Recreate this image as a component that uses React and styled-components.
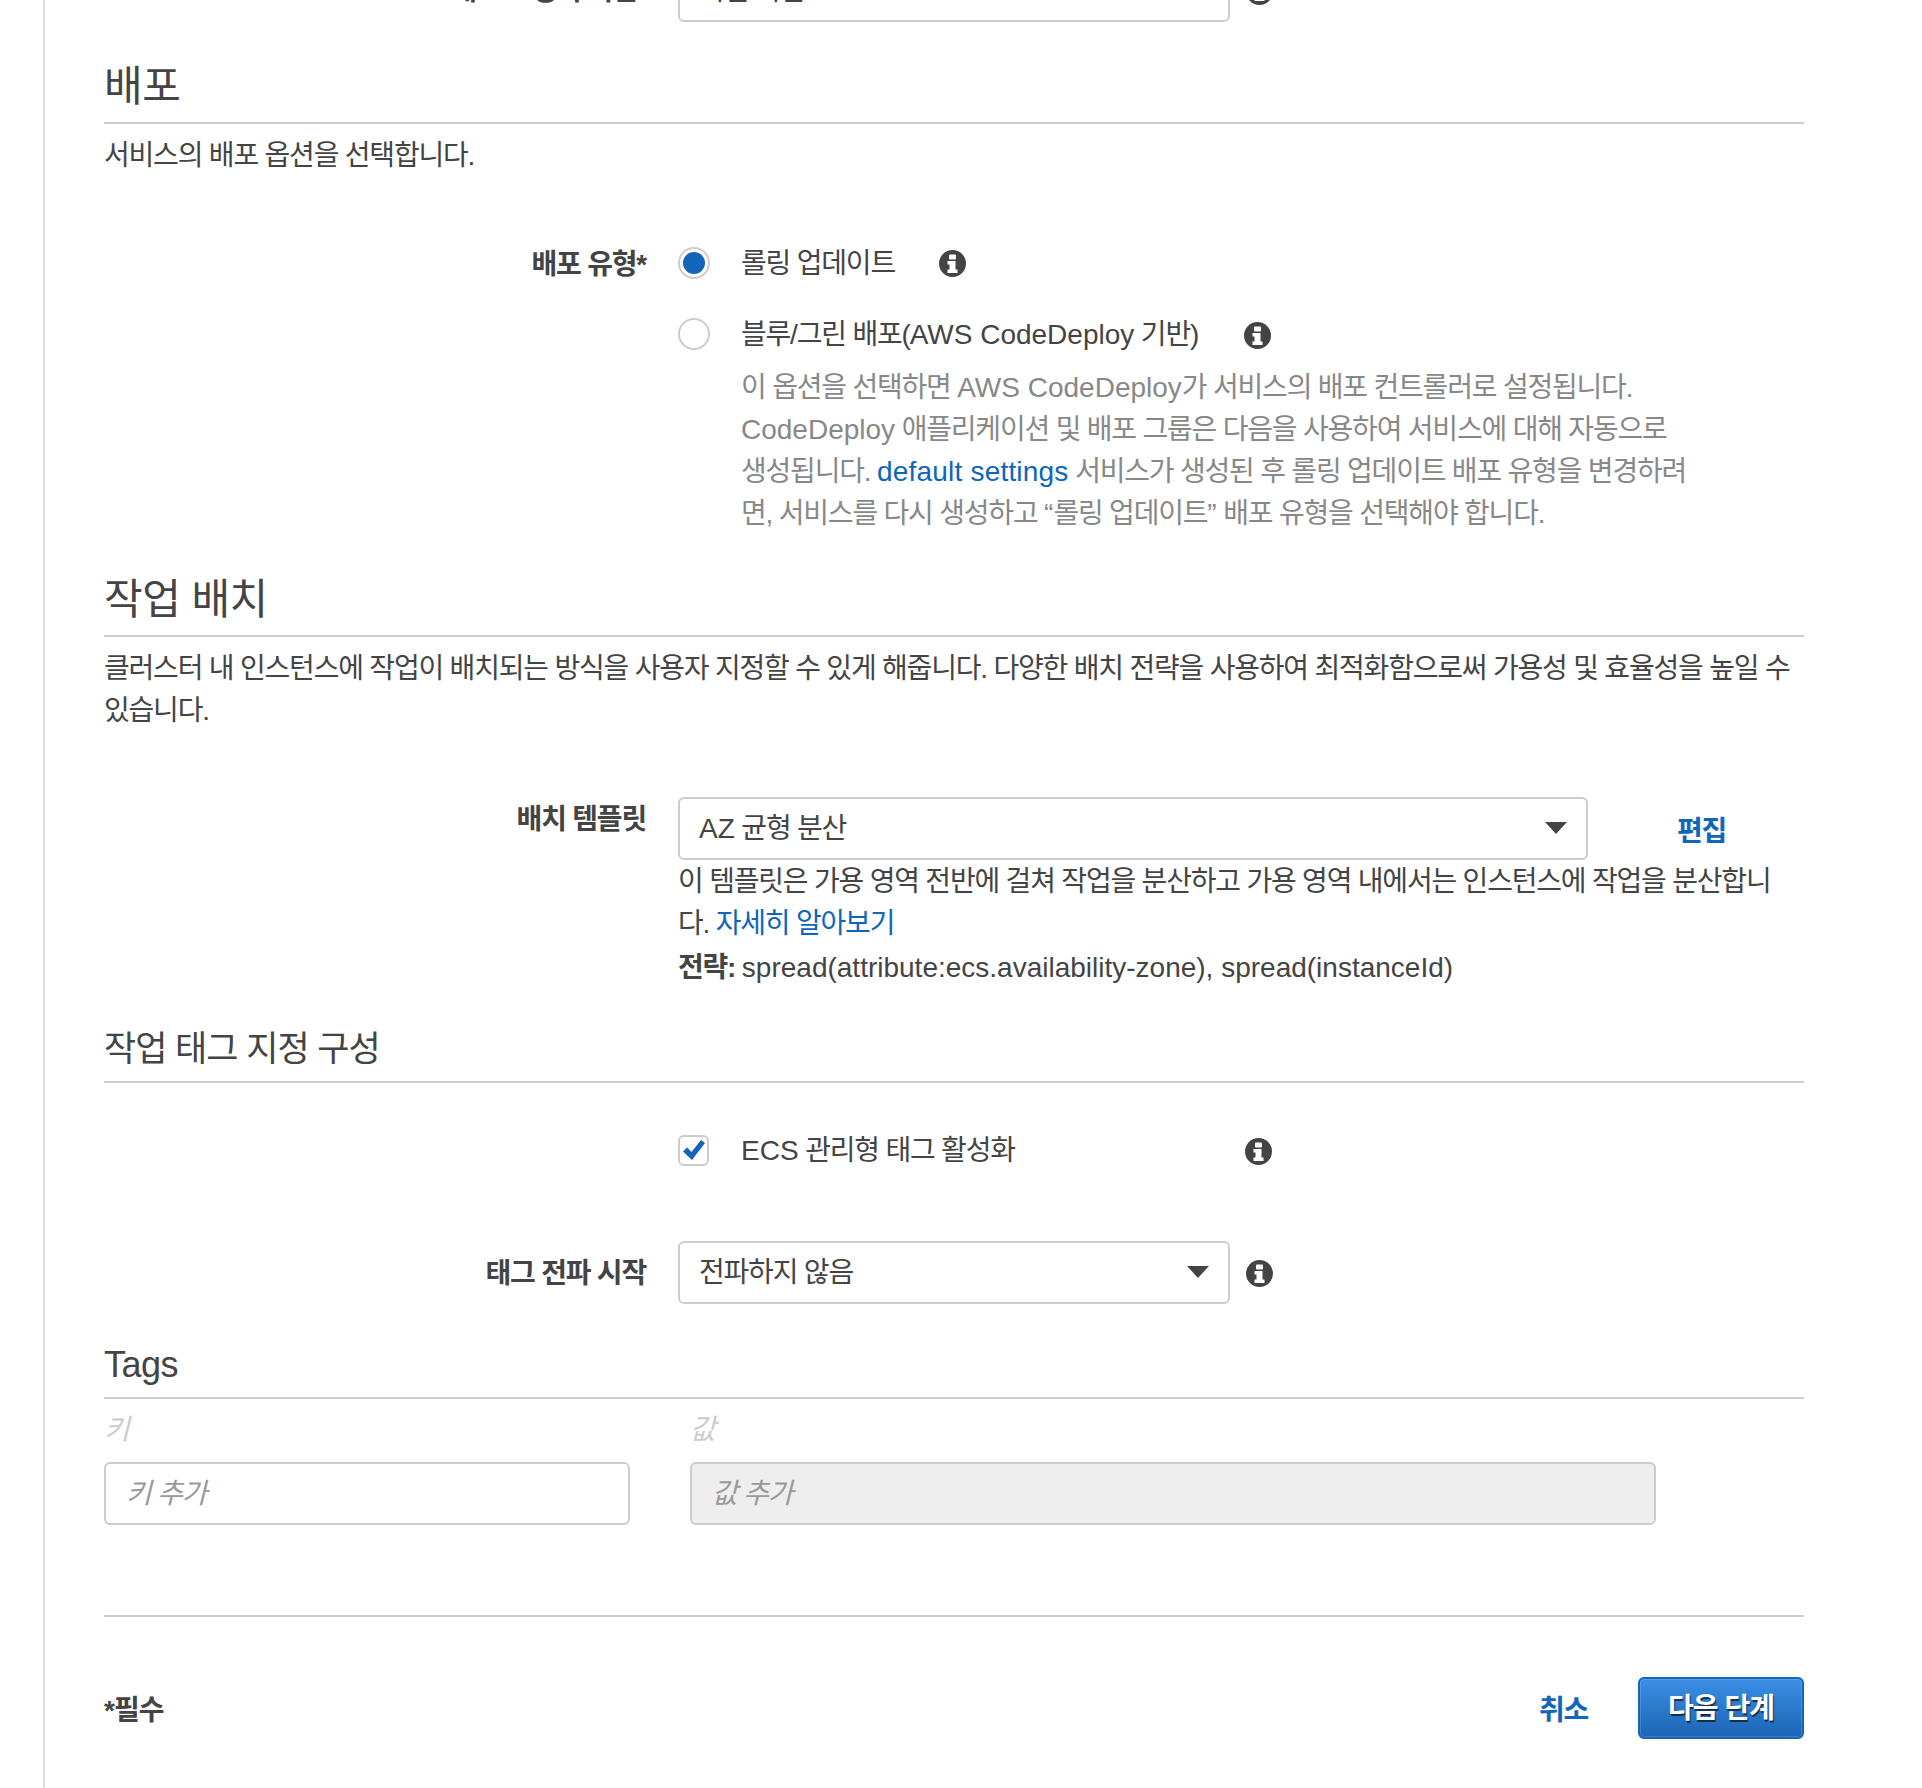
import React from "react";
import styled, { createGlobalStyle } from "styled-components";

const Global = createGlobalStyle`
  html, body { margin: 0; padding: 0; background: #fff; }
  body {
    font-family: "Liberation Sans", "Noto Sans CJK KR", sans-serif;
    font-size: 28px;
    line-height: 42px;
    color: #444;
  }
`;

const Page = styled.div`
  width: 1922px;
  height: 1788px;
  overflow: hidden;
  box-sizing: border-box;
  padding-left: 43px;
`;
const Panel = styled.div`
  display: flow-root;
  border-left: 2px solid #ddd;
  height: 100%;
  box-sizing: border-box;
  padding: 0 118px 0 59px;
`;
const Clipped = styled.div`
  margin-top: -41px;
`;
const Heading = styled.h2`
  margin: ${(p) => p.$top}px 0 0;
  font-size: ${(p) => p.$size || 42}px;
  font-weight: 400;
  line-height: 50px;
  padding-bottom: ${(p) => p.$pad || 10}px;
  border-bottom: 2px solid #ccc;
  color: #444;
  letter-spacing: ${(p) => p.$track ?? -0.5}px;
`;
const Latin = styled.span`
  letter-spacing: ${(p) => p.$track || 0}px;
`;
const Desc = styled.p`
  margin: 11px 0 0;
  letter-spacing: -1.2px;
`;
const Row = styled.div`
  display: grid;
  grid-template-columns: 542px 1fr;
  column-gap: 32px;
  margin-top: ${(p) => p.$top || 0}px;
  align-items: ${(p) => p.$align || "center"};
`;
const Label = styled.label`
  text-align: right;
  font-weight: 700;
  letter-spacing: -1.2px;
  white-space: nowrap;
  padding-top: ${(p) => p.$nudge || 0}px;
`;
const Field = styled.div`
  display: flex;
  align-items: center;
  min-width: 0;
`;
const Select = styled.div`
  box-sizing: border-box;
  width: ${(p) => p.$width}px;
  height: 63px;
  flex: none;
  border: 2px solid #ccc;
  border-radius: 6px;
  padding: 0 19px;
  display: flex;
  align-items: center;
  justify-content: space-between;
  letter-spacing: -1.2px;
  background: #fff;
`;
const Caret = styled.span`
  width: 0;
  height: 0;
  border-left: 11px solid transparent;
  border-right: 11px solid transparent;
  border-top: 12px solid #444;
  margin-top: -2px;
`;
const InfoWrap = styled.span`
  display: inline-flex;
  flex: none;
  margin-left: ${(p) => p.$left}px;
  margin-top: 2px;
`;
const Radio = styled.span`
  box-sizing: border-box;
  width: 32px;
  height: 32px;
  flex: none;
  border-radius: 50%;
  border: 2px solid #ccc;
  display: flex;
  align-items: center;
  justify-content: center;
  background: #fff;
  &::after {
    content: "";
    display: ${(p) => (p.$on ? "block" : "none")};
    width: 22px;
    height: 22px;
    border-radius: 50%;
    background: #1166bb;
  }
`;
const Check = styled.span`
  box-sizing: border-box;
  width: 31px;
  height: 31px;
  flex: none;
  border: 2px solid #ccc;
  border-radius: 6px;
  display: flex;
  align-items: center;
  justify-content: center;
`;
const OptText = styled.span`
  margin-left: ${(p) => p.$left || 31}px;
  padding-top: 2px;
  letter-spacing: -1.2px;
  white-space: nowrap;
  width: ${(p) => p.$width || "auto"};
`;
const Muted = styled.p`
  margin: 11px 0 0 63px;
  width: 956px;
  color: #888;
  letter-spacing: -1.2px;
`;
const Link = styled.a`
  color: #0e66bb;
`;
const BoldLink = styled.a`
  color: #1166bb;
  font-weight: 700;
  letter-spacing: -1.2px;
  margin-left: ${(p) => p.$left || 0}px;
  padding-top: ${(p) => p.$nudge || 0}px;
`;
const Helper = styled.p`
  margin: ${(p) => p.$top || 0}px 0 0;
  width: 1120px;
  letter-spacing: -1.2px;
`;
const TagGrid = styled.div`
  display: grid;
  grid-template-columns: 526px 966px;
  column-gap: 60px;
  margin-top: 10px;
`;
const TagHead = styled.div`
  font-style: italic;
  color: #ccc;
  line-height: 42px;
  margin-bottom: 11px;
`;
const TagInput = styled.div`
  box-sizing: border-box;
  height: 63px;
  border: 2px solid #ccc;
  border-radius: 6px;
  padding: 0 20px;
  display: flex;
  align-items: center;
  font-style: italic;
  color: #999;
  letter-spacing: -1.2px;
  background: ${(p) => (p.$disabled ? "#eee" : "#fff")};
`;
const Footer = styled.div`
  margin-top: 90px;
  border-top: 2px solid #ccc;
  padding-top: 60px;
  display: flex;
  align-items: center;
  justify-content: space-between;
`;
const Required = styled.span`
  font-weight: 700;
  letter-spacing: -1px;
  padding-top: 5px;
`;
const Actions = styled.div`
  display: flex;
  align-items: center;
  gap: 50px;
`;
const Primary = styled.button`
  box-sizing: border-box;
  width: 166px;
  height: 62px;
  border: 2px solid #1166bb;
  border-radius: 6px;
  background: linear-gradient(#3b8fe6, #1c64b4);
  box-shadow: inset 0 0 0 1px rgba(255, 255, 255, 0.15);
  color: #fff;
  font: 700 28px/1 "Liberation Sans", "Noto Sans CJK KR", sans-serif;
  letter-spacing: -1px;
  text-shadow: 1px 2px 1px rgba(0, 0, 0, 0.6);
  padding: 2px 0 0;
`;

const Info = ({ left }) => (
  <InfoWrap $left={left}>
    <svg width="27" height="27" viewBox="0 0 27 27" aria-hidden="true">
      <circle cx="13.5" cy="13.5" r="13.5" fill="#444" />
      <rect x="10" y="4.500" width="7" height="5" rx="1" fill="#fff" />
      <path d="M8.500 11h8v8.500h2v3.500h-10v-3.500h2v-5h-2z" fill="#fff" />
    </svg>
  </InfoWrap>
);

const Tick = () => (
  <svg width="24" height="22" viewBox="0 0 24 22" aria-hidden="true">
    <path d="M1 12.500l4-4 4.500 4.500L19 1l4 3L10 21z" fill="#1166bb" />
  </svg>
);

export default function App() {
  return (
    <Page>
      <Global />
      <Panel>
        <Clipped>
          <Row>
            <Label>태스크 정의 버전*</Label>
            <Field>
              <Select $width={552}>최신 버전</Select>
              <Info left={16} />
            </Field>
          </Row>
        </Clipped>

        <Heading $top={40}>배포</Heading>
        <Desc>서비스의 배포 옵션을 선택합니다.</Desc>

        <Row $top={62}>
          <Label $nudge={5}>배포 유형*</Label>
          <Field>
            <Radio $on />
            <OptText>롤링 업데이트</OptText>
            <Info left={44} />
          </Field>
        </Row>
        <Row $top={26}>
          <span />
          <Field>
            <Radio />
            <OptText>
              블루/그린 배포(<Latin>AWS CodeDeploy</Latin> 기반)
            </OptText>
            <Info left={46} />
          </Field>
        </Row>
        <Row $align="start">
          <span />
          <Muted>
            이 옵션을 선택하면 <Latin>AWS CodeDeploy</Latin>가 서비스의 배포 컨트롤러로 설정됩니다.{" "}
            <Latin>CodeDeploy</Latin> 애플리케이션 및 배포 그룹은 다음을 사용하여 서비스에 대해 자동으로 생성됩니다.{" "}
            <Link>
              <Latin $track={0.2}>default settings</Latin>
            </Link>{" "}
            서비스가 생성된 후 롤링 업데이트 배포 유형을 변경하려면, 서비스를 다시 생성하고 <Latin>“</Latin>롤링 업데이트<Latin>”</Latin> 배포 유형을 선택해야 합니다.
          </Muted>
        </Row>

        <Heading $top={40}>작업 배치</Heading>
        <Desc>
          클러스터 내 인스턴스에 작업이 배치되는 방식을 사용자 지정할 수 있게 해줍니다. 다양한 배치 전략을 사용하여 최적화함으로써 가용성 및 효율성을 높일 수 있습니다.
        </Desc>

        <Row $top={65} $align="start">
          <Label $nudge={2}>배치 템플릿</Label>
          <Field>
            <Select $width={910}>
              <span>
                <Latin>AZ</Latin> 균형 분산
              </span>
              <Caret />
            </Select>
            <BoldLink $left={89} $nudge={6}>편집</BoldLink>
          </Field>
        </Row>
        <Row $align="start">
          <span />
          <div>
            <Helper $top={1}>
              이 템플릿은 가용 영역 전반에 걸쳐 작업을 분산하고 가용 영역 내에서는 인스턴스에 작업을 분산합니다. <Link>자세히 알아보기</Link>
            </Helper>
            <Helper $top={2}>
              <b>전략:</b> <Latin>spread(attribute:ecs.availability-zone), spread(instanceId)</Latin>
            </Helper>
          </div>
        </Row>

        <Heading $top={35} $size={35} $track={-1} $pad={7}>작업 태그 지정 구성</Heading>

        <Row $top={45}>
          <span />
          <Field>
            <Check>
              <Tick />
            </Check>
            <OptText $left={32} $width="504px">
              <Latin>ECS</Latin> 관리형 태그 활성화
            </OptText>
            <Info left={0} />
          </Field>
        </Row>

        <Row $top={69}>
          <Label $nudge={2}>태그 전파 시작</Label>
          <Field>
            <Select $width={552}>
              전파하지 않음
              <Caret />
            </Select>
            <Info left={16} />
          </Field>
        </Row>

        <Heading $top={36} $size={36} $pad={7}>Tags</Heading>
        <TagGrid>
          <div>
            <TagHead>키</TagHead>
            <TagInput>키 추가</TagInput>
          </div>
          <div>
            <TagHead>값</TagHead>
            <TagInput $disabled>값 추가</TagInput>
          </div>
        </TagGrid>

        <Footer>
          <Required>*필수</Required>
          <Actions>
            <BoldLink $nudge={5}>취소</BoldLink>
            <Primary>다음 단계</Primary>
          </Actions>
        </Footer>
      </Panel>
    </Page>
  );
}
